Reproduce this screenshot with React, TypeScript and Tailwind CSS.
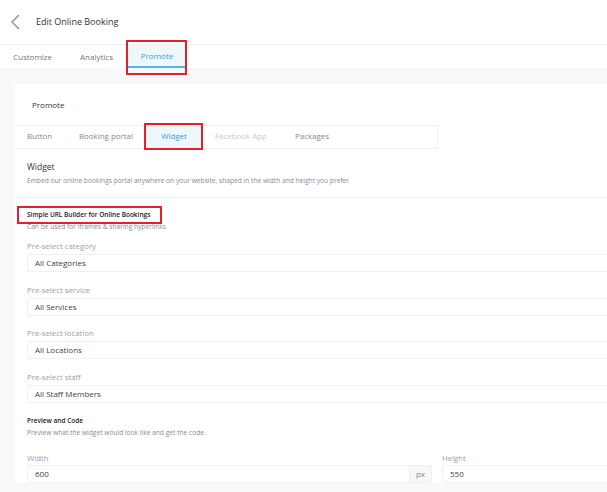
import React from "react";

const fields = [
  { label: "Pre-select category", value: "All Categories" },
  { label: "Pre-select service", value: "All Services" },
  { label: "Pre-select location", value: "All Locations" },
  { label: "Pre-select staff", value: "All Staff Members" },
];

function ChevronLeft() {
  return (
    <svg width="12" height="16" viewBox="0 0 12 16" fill="none">
      <path d="M9.5 1.5L3 8L9.5 14.5" stroke="#8a8a8a" strokeWidth="1.3" strokeLinecap="round" />
    </svg>
  );
}

export default function App() {
  return (
    <div
      className="w-[607px] h-[492px] overflow-hidden bg-[#f8f9fa] text-[#333]"
      style={{ fontFamily: "'Open Sans', sans-serif" }}
    >
      <header className="h-[45px] flex items-center bg-white border-b border-[#f0f0f0]">
        <button className="ml-[9px] w-[14px] flex items-center">
          <ChevronLeft />
        </button>
        <h1 className="ml-[13px] text-[9px] text-[#333]">Edit Online Booking</h1>
      </header>

      <nav className="h-[23px] flex items-stretch bg-white text-[8px] text-[#777]">
        <div className="ml-[13px] w-[67px] flex items-center">Customize</div>
        <div className="w-[48px] flex items-center">Analytics</div>
        <div className="relative w-[58px]">
          <div className="h-full flex items-center justify-center bg-[#eef7fc] text-[#3b9fd0] border-b-2 border-[#5ab4de]">
            Promote
          </div>
          <div className="absolute left-[-2px] right-[-1px] top-[-5px] bottom-[-7px] border-2 border-[#e4212a]" />
        </div>
      </nav>

      <div className="pt-[16px] pl-[14px]">
        <div className="w-[700px] bg-white">
          <div className="h-[41px] flex items-center pl-[18px] text-[8px] text-[#333]">Promote</div>

          <div className="h-[24px] flex">
            <div className="flex items-stretch w-[424px] border-t border-r border-b border-[#f0f0f0] text-[7.9px] text-[#888]">
              <div className="ml-[13px] w-[52px] flex items-center">Button</div>
              <div className="w-[67px] flex items-center">Booking portal</div>
              <div className="relative w-[56px]">
                <div className="h-full flex items-center justify-center bg-[#eef7fc] text-[#3b9fd0]">Widget</div>
                <div className="absolute left-[-2px] right-[-1px] top-[-3px] bottom-[-2px] border-2 border-[#e4212a]" />
              </div>
              <div className="ml-[13px] w-[80px] flex items-center text-[#c8c8cc]">Facebook App</div>
              <div className="flex items-center">Packages</div>
            </div>
          </div>

          <section className="pl-[13px] pt-[11px] pb-[10px] border-b border-[#f0f0f0]">
            <div className="text-[8.5px] text-[#333] leading-[14px]">Widget</div>
            <div className="text-[6.65px] text-[#8a8a9a] leading-[13px]">
              Embed our online bookings portal anywhere on your website, shaped in the width and height you prefer
            </div>
          </section>

          <section className="pl-[13px] pt-[11px]">
            <div className="relative w-fit">
              <div className="text-[6.5px] font-semibold text-[#222] leading-[12px]">Simple URL Builder for Online Bookings</div>
              <div className="absolute left-[-10px] right-[-12px] top-[-3px] bottom-[-3px] border-2 border-[#e4212a]" />
            </div>
            <div className="text-[6.65px] text-[#8a8a9a] leading-[12px]">Can be used for iframes &amp; sharing hyperlinks</div>

            <div className="flex flex-col">
              {fields.map((f, i) => (
                <div key={f.label} className={i === 0 ? "mt-[6px]" : i === 2 ? "mt-[10px]" : "mt-[11px]"}>
                  <div className="text-[7.8px] text-[#9c9cb0] leading-[14px]">{f.label}</div>
                  <div className="h-[18px] mt-[1px] flex items-center pl-[7px] border border-[#f0f0f0] rounded-[2px] text-[8px] text-[#444]">
                    {f.value}
                  </div>
                </div>
              ))}
            </div>

            <div className="mt-[12px] text-[6.5px] font-semibold text-[#222] leading-[12px]">Preview and Code</div>
            <div className="text-[6.65px] text-[#8a8a9a] leading-[12px]">Preview what the widget would look like and get the code.</div>

            <div className="mt-[12px] flex gap-[10px]">
              <div className="w-[405px]">
                <div className="text-[7.8px] text-[#9c9cb0] leading-[14px]">Width</div>
                <div className="h-[18px] flex border border-[#f0f0f0] rounded-[2px] text-[8px] text-[#444]">
                  <div className="flex-1 flex items-center pl-[7px]">600</div>
                  <div className="w-[22px] flex items-center justify-center bg-[#f7f7f8] text-[#888] border-l border-[#f0f0f0]">px</div>
                </div>
              </div>
              <div className="w-[250px]">
                <div className="text-[7.8px] text-[#9c9cb0] leading-[14px]">Height</div>
                <div className="h-[18px] flex items-center pl-[7px] border border-[#f0f0f0] rounded-[2px] text-[8px] text-[#444]">
                  550
                </div>
              </div>
            </div>
          </section>
        </div>
      </div>
    </div>
  );
}
